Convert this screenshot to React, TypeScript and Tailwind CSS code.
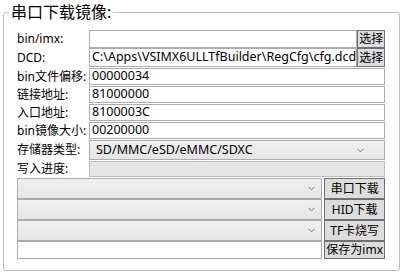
import React from "react";

const font = { fontFamily: '"Noto Sans", "Noto Sans CJK SC", sans-serif' };

function Chevron() {
  return (
    <svg width="7" height="5" viewBox="0 0 7 5" className="shrink-0">
      <polyline points="0.5,0.8 3.5,3.8 6.5,0.8" fill="none" stroke="#7a7a7a" strokeWidth="1" />
    </svg>
  );
}

function TextBox({ value, h }: { value?: string; h: string }) {
  return (
    <div className={`flex-1 ${h} border border-[#abadb3] bg-white flex items-center pl-[2px] text-[12.5px] text-black leading-none overflow-hidden whitespace-nowrap`}>
      {value}
    </div>
  );
}

function Btn({ label, w, h }: { label: string; w: string; h: string }) {
  return (
    <div className={`${w} ${h} shrink-0 border border-[#707070] bg-[#dddddd] flex items-center justify-center text-[12px] text-black leading-none whitespace-nowrap`}>
      {label}
    </div>
  );
}

function Combo({ value, h, chevPad }: { value?: string; h: string; chevPad: string }) {
  return (
    <div className={`flex-1 ${h} border border-[#acacac] bg-gradient-to-b from-[#f0f0f0] to-[#e5e5e5] flex items-center justify-between pl-[6px] ${chevPad} text-[12.5px] text-black leading-none`}>
      <span>{value}</span>
      <Chevron />
    </div>
  );
}

function Label({ text }: { text: string }) {
  return <div className="w-[72px] shrink-0 text-[12px] text-black leading-none whitespace-nowrap">{text}</div>;
}

export default function App() {
  return (
    <div className="w-[407px] h-[278px] bg-white relative" style={font}>
      <fieldset className="absolute left-[3px] top-[3px] w-[397px] h-[268px] border border-[#bcbcbc] rounded-[3px] pl-[13px] pr-[14px] pt-[9px] m-0">
        <legend className="ml-[-8px] px-[2px] text-[16px] leading-[18px] text-black">串口下载镜像:</legend>
        <div className="flex flex-col">
          <div className="flex items-center h-[18px]">
            <Label text="bin/imx:" />
            <TextBox h="h-[18px]" />
            <Btn label="选择" w="w-[28px]" h="h-[18px]" />
          </div>
          <div className="flex items-center h-[19px]">
            <Label text="DCD:" />
            <TextBox h="h-[19px]" value="C:\Apps\VSIMX6ULLTfBuilder\RegCfg\cfg.dcd" />
            <Btn label="选择" w="w-[28px]" h="h-[19px]" />
          </div>
          <div className="flex items-center h-[17px] mt-[1px]">
            <Label text="bin文件偏移:" />
            <TextBox h="h-[17px]" value="00000034" />
          </div>
          <div className="flex items-center h-[17px] mt-[1px]">
            <Label text="链接地址:" />
            <TextBox h="h-[17px]" value="81000000" />
          </div>
          <div className="flex items-center h-[17px] mt-[1px]">
            <Label text="入口地址:" />
            <TextBox h="h-[17px]" value="8100003C" />
          </div>
          <div className="flex items-center h-[17px] mt-[1px]">
            <Label text="bin镜像大小:" />
            <TextBox h="h-[17px]" value="00200000" />
          </div>
          <div className="flex items-center h-[20px] mt-[1px]">
            <Label text="存储器类型:" />
            <Combo h="h-[20px]" value="SD/MMC/eSD/eMMC/SDXC" chevPad="pr-[20px]" />
          </div>
          <div className="flex items-center h-[16px] mt-[1px]">
            <Label text="写入进度:" />
            <div className="flex-1 h-[16px] border border-[#bcbcbc] bg-[#e6e6e6]" />
          </div>
          <div className="flex items-center gap-[2px] h-[21px] mt-[1px]">
            <Combo h="h-[21px]" chevPad="pr-[6px]" />
            <Btn label="串口下载" w="w-[61px]" h="h-[21px]" />
          </div>
          <div className="flex items-center gap-[2px] h-[21px]">
            <Combo h="h-[21px]" chevPad="pr-[6px]" />
            <Btn label="HID下载" w="w-[61px]" h="h-[21px]" />
          </div>
          <div className="flex items-center gap-[2px] h-[21px]">
            <Combo h="h-[21px]" chevPad="pr-[6px]" />
            <Btn label="TF卡烧写" w="w-[61px]" h="h-[21px]" />
          </div>
          <div className="flex items-center gap-[2px] h-[18px]">
            <TextBox h="h-[18px]" />
            <Btn label="保存为imx" w="w-[61px]" h="h-[18px]" />
          </div>
        </div>
      </fieldset>
    </div>
  );
}
